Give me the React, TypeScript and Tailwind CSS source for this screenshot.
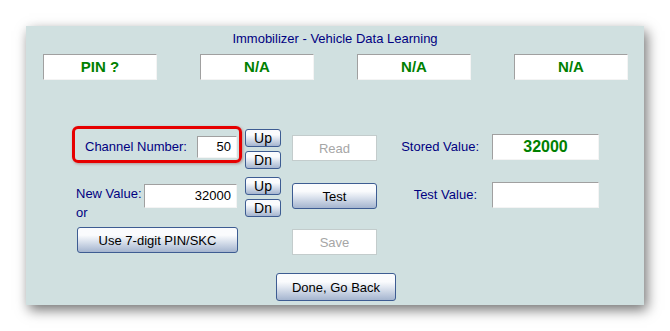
const TOP_BOXES = ["PIN ?", "N/A", "N/A", "N/A"];

const sunken =
  "bg-white border border-t-[#a0a0a0] border-l-[#a0a0a0] border-b-[#f4f4f4] border-r-[#f4f4f4]";
const blueBtn =
  "flex items-center justify-center border border-[#3d5c92] rounded-[3px] bg-linear-to-b from-[#fafbfd] from-30% via-[#e2e8f1] to-[#a5b5cf] text-black font-normal leading-none";
const offBtn =
  "flex items-center justify-center bg-white border border-[#c3cccc] text-[#a6a6a6] font-normal leading-none";

function UpDn() {
  return (
    <div className="flex flex-col gap-[4px]">
      <button className={`${blueBtn} w-[36px] h-[18px] text-[14px]`}>Up</button>
      <button className={`${blueBtn} w-[36px] h-[18px] text-[14px]`}>Dn</button>
    </div>
  );
}

export default function App() {
  return (
    <div className="w-[670px] h-[331px] bg-white overflow-hidden pt-[26px] pl-[26px]">
      <div className="w-[618px] h-[279px] bg-[#d0e0e0] shadow-[3px_5px_12px_rgba(0,0,0,0.55)] flex flex-col font-['Liberation_Sans',Arial,sans-serif] text-[13px]">
        {/* ── Title ── */}
        <div className="pt-[5px] text-center leading-[15px] text-[#000080]">
          Immobilizer - Vehicle Data Learning
        </div>

        {/* ── Status boxes ── */}
        <div className="mt-[8px] flex gap-[43px] pl-[17px]">
          {TOP_BOXES.map((t, i) => (
            <div
              key={i}
              className={`${sunken} w-[114px] h-[26px] flex items-center justify-center font-bold text-[15px] text-[#008000]`}
            >
              {t}
            </div>
          ))}
        </div>

        {/* ── Main area ── */}
        <div className="mt-[46px] flex items-start pl-[46px]">
          {/* Left: channel / new value */}
          <div className="flex flex-col">
            <div className="flex items-start">
              <div className="w-[170px] h-[37px] border-[3px] border-[#e60000] rounded-[6px] shadow-[1px_1px_3px_rgba(120,0,0,0.35)] flex items-start justify-between pt-[7px] pl-[10px] pr-[2px]">
                <span className="leading-[22px] text-[#000080]">Channel Number:</span>
                <div className={`${sunken} w-[40px] h-[22px] flex items-center justify-end pr-[5px] text-black`}>
                  50
                </div>
              </div>
              <div className="ml-[3px] mt-[3px]">
                <UpDn />
              </div>
            </div>

            <div className="mt-[8px] flex items-start">
              <div className="w-[72px] pl-[4px] flex flex-col text-[#000080] leading-[16px]">
                <span className="mt-[9px]">New Value:</span>
                <span className="mt-[3px]">or</span>
              </div>
              <div className={`${sunken} mt-[7px] w-[93px] h-[24px] flex items-center justify-end pr-[5px] text-black`}>
                32000
              </div>
              <div className="ml-[8px]">
                <UpDn />
              </div>
            </div>

            <button className={`${blueBtn} mt-[6px] ml-[5px] w-[161px] h-[26px]`}>
              Use 7-digit PIN/SKC
            </button>
          </div>

          {/* Middle: actions */}
          <div className="ml-[11px] mt-[9px] flex flex-col">
            <button className={`${offBtn} w-[85px] h-[26px]`}>Read</button>
            <button className={`${blueBtn} mt-[22px] w-[85px] h-[26px]`}>Test</button>
            <button className={`${offBtn} mt-[20px] w-[85px] h-[26px]`}>Save</button>
          </div>

          {/* Right: values */}
          <div className="ml-[2px] mt-[8px] flex flex-col">
            <div className="flex items-center">
              <span className="w-[100px] text-right text-[#000080]">Stored Value:</span>
              <div className={`${sunken} ml-[13px] w-[107px] h-[26px] flex items-center justify-center font-bold text-[16px] text-[#008000]`}>
                32000
              </div>
            </div>
            <div className="mt-[22px] flex items-center">
              <span className="w-[100px] pr-[2px] text-right text-[#000080]">Test Value:</span>
              <div className={`${sunken} ml-[13px] w-[107px] h-[26px]`} />
            </div>
          </div>
        </div>

        {/* ── Footer ── */}
        <div className="mt-[18px] flex justify-center pl-[2px]">
          <button className={`${blueBtn} w-[120px] h-[28px]`}>Done, Go Back</button>
        </div>
      </div>
    </div>
  );
}
